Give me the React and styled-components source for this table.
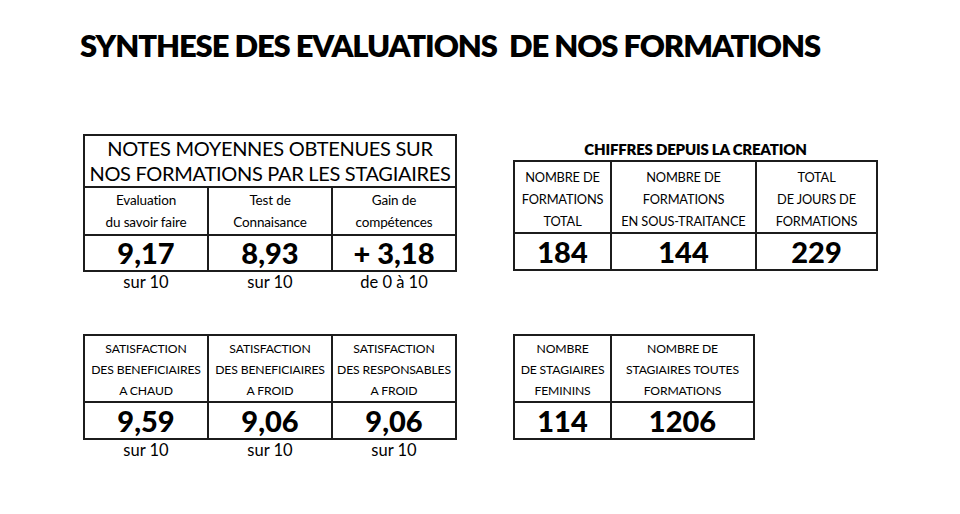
import React from 'react';
import styled, { createGlobalStyle } from 'styled-components';

const GlobalStyle = createGlobalStyle`
  html, body {
    margin: 0;
    padding: 0;
    background: #ffffff;
  }
  body {
    font-family: Lato, "Liberation Sans", Arial, sans-serif;
    color: #000;
  }
`;

const Page = styled.div`
  width: 960px;
  height: 514px;
  box-sizing: border-box;
  padding: 26px 0 0 80px;
  overflow: hidden;
`;

const Title = styled.h1`
  margin: 0;
  font-size: 31px;
  font-weight: 800;
  letter-spacing: -1.1px;
  line-height: 38px;
  white-space: pre;
`;

const Grid = styled.div`
  display: grid;
  grid-template-columns: 430px 370px;
  grid-template-rows: 200px auto;
  margin-top: 70px;
  padding-left: 3px;
  align-items: start;
  justify-items: start;
`;

const Block = styled.div`
  display: flex;
  flex-direction: column;
  align-items: ${(p) => (p.$center ? 'center' : 'flex-start')};
  padding-top: ${(p) => p.$offset || 0}px;
`;

const Heading = styled.div`
  font-size: 15px;
  font-weight: 800;
  line-height: 18px;
  margin-bottom: 2px;
  letter-spacing: -0.2px;
`;

const Table = styled.table`
  border-collapse: collapse;
  table-layout: fixed;
  width: ${(p) => p.$w}px;
`;

const Th = styled.th`
  border: 2px solid #1c1c1c;
  height: 50px;
  padding: 0;
  font-size: 20px;
  font-weight: 400;
  line-height: 25px;
  letter-spacing: -0.3px;
  white-space: nowrap;
  overflow: hidden;
`;

const Label = styled.td`
  border: 2px solid #1c1c1c;
  padding: ${(p) => p.$pt || 0}px 0 0;
  height: ${(p) => p.$h}px;
  text-align: center;
  font-size: ${(p) => p.$fs || 12.2}px;
  line-height: ${(p) => p.$lh || 22}px;
  white-space: nowrap;
  letter-spacing: -0.15px;
  overflow: hidden;
`;

const Value = styled.td`
  border: 2px solid #1c1c1c;
  padding: 0;
  height: ${(p) => p.$h || 32}px;
  text-align: center;
  font-size: 29px;
  font-weight: 900;
  line-height: 30px;
`;

const Note = styled.td`
  padding: 0;
  text-align: center;
  font-size: 16.5px;
  line-height: 20px;
`;

const Lines = ({ lines }) =>
  lines.map((l, i) => (
    <React.Fragment key={i}>
      {i > 0 && <br />}
      {l}
    </React.Fragment>
  ));

const StatTable = ({ widths, title, labels, values, notes, labelHeight, labelLine, labelSize, labelTop, valueHeight }) => (
  <Table $w={widths.reduce((a, b) => a + b, 0)}>
    <colgroup>
      {widths.map((w, i) => (
        <col key={i} style={{ width: w }} />
      ))}
    </colgroup>
    <tbody>
      {title && (
        <tr>
          <Th colSpan={widths.length}>
            <Lines lines={title} />
          </Th>
        </tr>
      )}
      <tr>
        {labels.map((l, i) => (
          <Label key={i} $h={labelHeight} $lh={labelLine} $fs={labelSize} $pt={labelTop}>
            <Lines lines={l} />
          </Label>
        ))}
      </tr>
      <tr>
        {values.map((v, i) => (
          <Value key={i} $h={valueHeight}>
            {v}
          </Value>
        ))}
      </tr>
      {notes && (
        <tr>
          {notes.map((n, i) => (
            <Note key={i}>{n}</Note>
          ))}
        </tr>
      )}
    </tbody>
  </Table>
);

const App = () => (
  <>
    <GlobalStyle />
    <Page>
      <Title>SYNTHESE DES EVALUATIONS  DE NOS FORMATIONS</Title>
      <Grid>
        <Block>
          <StatTable
            widths={[124, 124, 124]}
            title={['NOTES MOYENNES OBTENUES SUR', 'NOS FORMATIONS PAR LES STAGIAIRES']}
            labels={[
              ['Evaluation', 'du savoir faire'],
              ['Test de', 'Connaisance'],
              ['Gain de', 'compétences'],
            ]}
            labelHeight={46}
            labelSize={13.5}
            valueHeight={34}
            values={['9,17', '8,93', '+ 3,18']}
            notes={['sur 10', 'sur 10', 'de 0 à 10']}
          />
        </Block>
        <Block $center $offset={6}>
          <Heading>CHIFFRES DEPUIS LA CREATION</Heading>
          <StatTable
            widths={[97, 145, 121]}
            labels={[
              ['NOMBRE DE', 'FORMATIONS', 'TOTAL'],
              ['NOMBRE DE', 'FORMATIONS', 'EN SOUS-TRAITANCE'],
              ['TOTAL', 'DE JOURS DE', 'FORMATIONS'],
            ]}
            labelHeight={66}
            labelLine={22}
            labelSize={12.8}
            labelTop={4}
            valueHeight={35}
            values={['184', '144', '229']}
          />
        </Block>
        <Block>
          <StatTable
            widths={[124, 124, 124]}
            labels={[
              ['SATISFACTION', 'DES BENEFICIAIRES', 'A CHAUD'],
              ['SATISFACTION', 'DES BENEFICIAIRES', 'A FROID'],
              ['SATISFACTION', 'DES RESPONSABLES', 'A FROID'],
            ]}
            labelHeight={64}
            labelLine={21}
            labelTop={1}
            values={['9,59', '9,06', '9,06']}
            valueHeight={35}
            notes={['sur 10', 'sur 10', 'sur 10']}
          />
        </Block>
        <Block>
          <StatTable
            widths={[97, 143]}
            labels={[
              ['NOMBRE', 'DE STAGIAIRES', 'FEMININS'],
              ['NOMBRE DE', 'STAGIAIRES TOUTES', 'FORMATIONS'],
            ]}
            labelHeight={64}
            labelLine={21}
            labelTop={1}
            values={['114', '1206']}
            valueHeight={35}
          />
        </Block>
      </Grid>
    </Page>
  </>
);

export default App;
